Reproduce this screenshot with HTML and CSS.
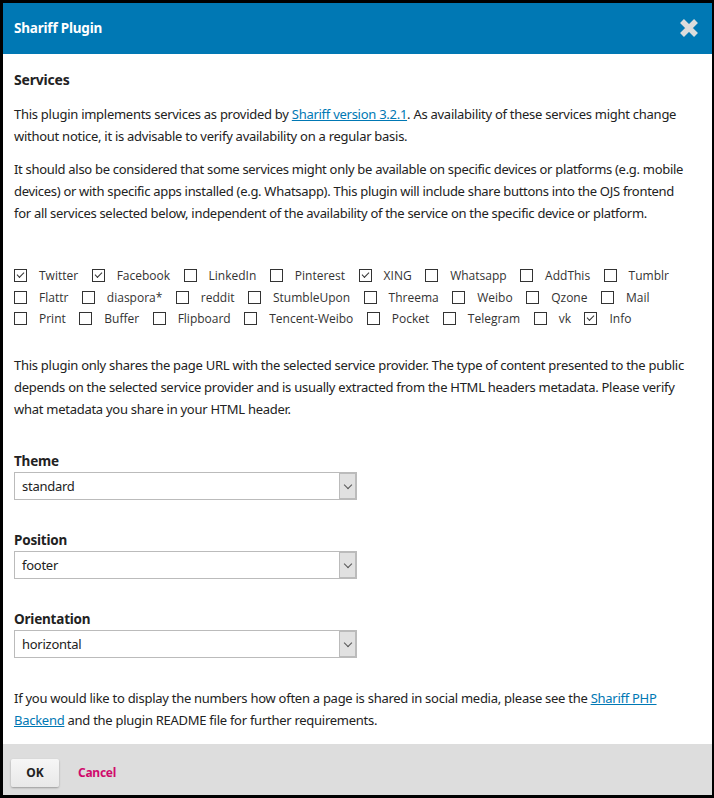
FILE: index.html
```html
<!DOCTYPE html>
<html>
<head>
<meta charset="utf-8">
<link rel="stylesheet" href="styles.css">
</head>
<body>
<div class="dialog">
  <div class="header">
    <span class="title">Shariff Plugin</span>
    <svg class="close" width="22" height="22" viewBox="0 0 22 22"><path d="M4 4 L18 18 M18 4 L4 18" stroke="#dcdcdc" stroke-width="5.5" stroke-linecap="butt"/></svg>
  </div>
  <div class="content">
    <h3 class="section">Services</h3>
    <p>This plugin implements services as provided by <a href="#">Shariff version 3.2.1</a>. As availability of these services might change without notice, it is advisable to verify availability on a regular basis.</p>
    <p class="p2">It should also be considered that some services might only be available on specific devices or platforms (e.g. mobile devices) or with specific apps installed (e.g. Whatsapp). This plugin will include share buttons into the OJS frontend for&nbsp;all services selected below, independent of the availability of the service on the specific device or platform.</p>
    <div class="services">
      <div class="row">
        <label class="cb"><span class="box checked"></span>Twitter</label>
        <label class="cb"><span class="box checked"></span>Facebook</label>
        <label class="cb"><span class="box"></span>LinkedIn</label>
        <label class="cb"><span class="box"></span>Pinterest</label>
        <label class="cb"><span class="box checked"></span>XING</label>
        <label class="cb"><span class="box"></span>Whatsapp</label>
        <label class="cb"><span class="box"></span>AddThis</label>
        <label class="cb"><span class="box"></span>Tumblr</label>
      </div>
      <div class="row">
        <label class="cb"><span class="box"></span>Flattr</label>
        <label class="cb"><span class="box"></span>diaspora*</label>
        <label class="cb"><span class="box"></span>reddit</label>
        <label class="cb"><span class="box"></span>StumbleUpon</label>
        <label class="cb"><span class="box"></span>Threema</label>
        <label class="cb"><span class="box"></span>Weibo</label>
        <label class="cb"><span class="box"></span>Qzone</label>
        <label class="cb"><span class="box"></span>Mail</label>
      </div>
      <div class="row">
        <label class="cb"><span class="box"></span>Print</label>
        <label class="cb"><span class="box"></span>Buffer</label>
        <label class="cb"><span class="box"></span>Flipboard</label>
        <label class="cb"><span class="box"></span>Tencent-Weibo</label>
        <label class="cb"><span class="box"></span>Pocket</label>
        <label class="cb"><span class="box"></span>Telegram</label>
        <label class="cb"><span class="box"></span>vk</label>
        <label class="cb"><span class="box checked"></span>Info</label>
      </div>
    </div>
    <p class="note">This plugin only shares the page URL with the selected service provider. The type of content presented to the public depends on the selected service provider and is usually extracted from the HTML headers metadata. Please verify what metadata you share in your HTML header.</p>
    <div class="field first">
      <div class="flabel">Theme</div>
      <div class="select"><span class="val">standard</span><span class="arrow"></span></div>
    </div>
    <div class="field">
      <div class="flabel">Position</div>
      <div class="select"><span class="val">footer</span><span class="arrow"></span></div>
    </div>
    <div class="field">
      <div class="flabel">Orientation</div>
      <div class="select"><span class="val">horizontal</span><span class="arrow"></span></div>
    </div>
    <p class="last">If you would like to display the numbers how often a page is shared in social media, please see the <a href="#">Shariff PHP Backend</a> and the plugin README file for further requirements.</p>
  </div>
  <div class="footer">
    <button class="ok">OK</button>
    <a href="#" class="cancel">Cancel</a>
  </div>
</div>
</body>
</html>
```
FILE: styles.css
```css
html, body { margin: 0; padding: 0; }
body {
  background: #000;
  padding: 3px 2px 3px 3px;
  font-family: "Noto Sans", sans-serif;
  font-size: 13px;
  letter-spacing: -0.27px;
  color: #222;
}
.dialog {
  background: #fff;
  height: 792px;
  display: flex;
  flex-direction: column;
}
.header {
  background: #0078b4;
  height: 51px;
  box-sizing: border-box;
  display: flex;
  align-items: center;
  justify-content: space-between;
  padding: 0 12px 2px 11px;
  flex-shrink: 0;
}
.title {
  color: #fff;
  font-weight: bold;
  font-size: 13.5px;
  letter-spacing: -0.2px;
}
.content {
  flex: 1;
  padding: 0 11px;
}
.section {
  font-size: 14px;
  font-weight: bold;
  margin: 16px 0 13px;
  line-height: 20px;
  letter-spacing: -0.2px;
}
p {
  margin: 0 0 11px;
  line-height: 22px;
}
.p2 { letter-spacing: -0.3px; }
a { color: #0078b4; text-decoration: underline; }
.services {
  margin-top: 41px;
  font-family: "Open Sans", sans-serif;
  font-size: 12px;
  letter-spacing: 0;
}
.row {
  display: flex;
  height: 21.5px;
  align-items: center;
}
.cb {
  display: flex;
  align-items: center;
  margin-right: 13.5px;
  color: #333;
}
.box {
  width: 11px;
  height: 11px;
  border: 1px solid #333;
  margin-right: 12px;
  position: relative;
}
.box.checked::after {
  content: "";
  position: absolute;
  left: 2px;
  top: 2px;
  width: 6px;
  height: 3px;
  border-left: 1px solid #333;
  border-bottom: 1px solid #333;
  transform: rotate(-45deg);
}
.note { margin-top: 24px; }
.field { margin-top: 31px; }
.field.first { margin-top: 32px; }
.flabel {
  font-weight: bold;
  font-size: 13.5px;
  line-height: 18px;
  margin-bottom: 2px;
  letter-spacing: -0.2px;
}
.select {
  width: 341px;
  height: 26px;
  border: 1px solid #bbb;
  display: flex;
  align-items: center;
  justify-content: space-between;
}
.val { padding-left: 7px; }
.arrow {
  width: 15px;
  height: 24px;
  background: #e1e1e1;
  border: 1px solid #bbb;
  position: relative;
}
.arrow::after {
  content: "";
  position: absolute;
  left: 5px;
  top: 8px;
  width: 5px;
  height: 5px;
  border-right: 1px solid #555;
  border-bottom: 1px solid #555;
  transform: rotate(45deg);
}
.last { margin-top: 29px; }
.footer {
  background: #ddd;
  height: 51px;
  box-sizing: border-box;
  display: flex;
  align-items: center;
  padding: 6px 0 0 8px;
  flex-shrink: 0;
}
.ok {
  width: 48px;
  height: 28px;
  background: linear-gradient(#f6f6f6, #e8e8e8);
  border: none;
  box-shadow: 0 1px 2px rgba(0,0,0,0.3);
  font-family: "Noto Sans", sans-serif;
  font-weight: bold;
  font-size: 12px;
  color: #222;
  border-radius: 2px;
}
.cancel {
  margin-left: 19px;
  color: #d00a6c;
  font-weight: bold;
  font-size: 12px;
  text-decoration: none;
}
```
